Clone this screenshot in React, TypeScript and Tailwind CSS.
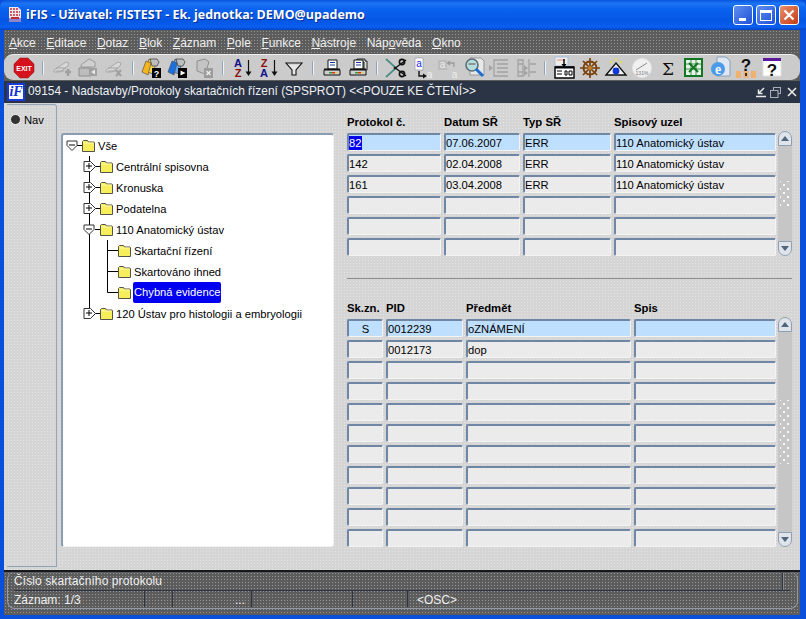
import type { ReactNode } from "react";

const font = "font-['Liberation_Sans',Arial,sans-serif]";
const dither =
  "bg-[radial-gradient(circle,rgba(255,255,255,0.35)_0.5px,transparent_0.7px)] bg-[length:3px_3px]";

const menus: [string, string, string][] = [
  ["", "A", "kce"],
  ["", "E", "ditace"],
  ["", "D", "otaz"],
  ["", "B", "lok"],
  ["", "Z", "áznam"],
  ["", "P", "ole"],
  ["", "F", "unkce"],
  ["", "N", "ástroje"],
  ["Náp", "o", "věda"],
  ["", "O", "kno"],
];

const Ico = ({ children }: { children: ReactNode }) => (
  <div className="flex h-[26px] w-[26px] shrink-0 items-center justify-center">
    <svg width="24" height="24" viewBox="0 0 24 24" className="block">
      {children}
    </svg>
  </div>
);

const Sep = () => (
  <div className="flex h-[26px] w-[12px] shrink-0 items-center justify-center">
    <div className="h-[14px] w-[2px] bg-[#eef2f6] border-l border-[#8fa3bd]" />
  </div>
);

const Exit = () => (
  <Ico>
    <path d="M8 2h8l6 6v8l-6 6H8l-6-6V8z" fill="#d4111c" stroke="#8f2a2f" strokeWidth="0.6" />
    <text x="12" y="14.5" textAnchor="middle" fontSize="7" fontWeight="700" fill="#fff" fontFamily="Liberation Sans">
      EXIT
    </text>
  </Ico>
);

const Ghost = ({ mark }: { mark: string }) => (
  <Ico>
    <path d="M4 14 16 6l3 1-1 3-8 6H4z" fill="#d8d8d8" stroke="#a9a9a9" />
    <path d="M6 12h10M6 15h8" stroke="#a2a2a2" />
    {mark === "plus" && <path d="M15 16h6M18 13v7" stroke="#a0a0a0" strokeWidth="2.4" />}
    {mark === "x" && <path d="m14 14 5 6M19 14l-5 6" stroke="#a0a0a0" strokeWidth="2" />}
  </Ico>
);

const Docs = ({ c1, c2, mark }: { c1: string; c2: string; mark: ReactNode }) => (
  <Ico>
    <path d="M9 3 16 6l-3 12-8-3z" fill={c2} stroke="#555" strokeWidth="0.7" />
    <path d="M6 5 11 7 8 19l-6-3z" fill={c1} stroke="#555" strokeWidth="0.7" />
    <path d="M10 3h7l2 3-2 4h-5z" fill="#bdbdbd" stroke="#333" strokeWidth="0.7" />
    {mark}
  </Ico>
);

const SortIcon = ({ top, bottom, c1, c2 }: { top: string; bottom: string; c1: string; c2: string }) => (
  <Ico>
    <text x="8" y="10.5" textAnchor="middle" fontSize="11" fontWeight="700" fill={c1} fontFamily="Liberation Sans">
      {top}
    </text>
    <text x="8" y="21" textAnchor="middle" fontSize="11" fontWeight="700" fill={c2} fontFamily="Liberation Sans">
      {bottom}
    </text>
    <path d="M18.5 4v13" stroke="#111" strokeWidth="1.2" />
    <path d="m15.5 15.5 3 4.5 3-4.5z" fill="#111" />
  </Ico>
);

const Printer = ({ stacked }: { stacked?: boolean }) => (
  <Ico>
    {stacked && <path d="M11 3h8v2h2v9h-3V6h-7z" fill="#ddd" stroke="#111" strokeWidth="0.9" />}
    <path d="M8 4h9v9H8z" fill="#fff" stroke="#111" />
    <path d="M10 6h5v1h-5zM10 8.5h5v1h-5z" fill="#1638a8" />
    <path d="M4 14h16v5H4z" fill="#cfcfcf" stroke="#111" />
    <path d="M4 12.5h16v1.5H4z" fill="#111" />
    <path d="M9 16h3v1.5H9z" fill="#2ea43a" />
    <path d="M12 16h3v1.5h-3z" fill="#d9322a" />
    <path d="M15 16h2v1.5h-2z" fill="#e7d020" />
  </Ico>
);

const App = () => {
  const rows1 = [
    ["82", "07.06.2007", "ERR", "110 Anatomický ústav"],
    ["142", "02.04.2008", "ERR", "110 Anatomický ústav"],
    ["161", "03.04.2008", "ERR", "110 Anatomický ústav"],
    ["", "", "", ""],
    ["", "", "", ""],
    ["", "", "", ""],
  ];
  const rows2 = [
    ["S", "0012239", "oZNÁMENÍ", ""],
    ["", "0012173", "dop", ""],
    ...Array.from({ length: 9 }, () => ["", "", "", ""]),
  ];

  return (
    <div className={`${font} flex h-[619px] w-[806px] flex-col overflow-hidden bg-[#0a4fdc] text-[12px] text-black`}>
      {/* xp title bar */}
      <div className="flex h-[30px] shrink-0 items-center rounded-t-[7px] bg-[linear-gradient(#0a55dc_0%,#1c74f4_12%,#0a62ee_30%,#0457e4_70%,#0a5ff0_90%,#0442c0_100%)] pl-[7px] pr-[7px]">
        <svg width="16" height="18" viewBox="0 0 16 18" className="mr-[3px] shrink-0">
          <path d="M2 1h9l3 3v12H2z" fill="#f4ecec" />
          <path d="M3 3h8M3 6h10M3 9h10" stroke="#c22a3a" strokeWidth="1.6" strokeDasharray="2 1" />
          <path d="M2 12h12v4H2z" fill="#8e86c8" />
          <path d="M4 11h8v2H4z" fill="#c22a3a" />
        </svg>
        <span className="font-['Open_Sans',sans-serif] text-[12.5px] leading-none font-bold whitespace-nowrap text-white [text-shadow:1px_1px_0_#0a2f90]">
          iFIS - Uživatel: FISTEST - Ek. jednotka: DEMO@upademo
        </span>
        <div className="ml-auto flex items-center gap-[3px]">
          <div className="flex h-[20px] w-[20px] items-end justify-start rounded-[3px] border border-white bg-[linear-gradient(135deg,#5f8ff0,#2050d8)] pb-[3px] pl-[5px]">
            <div className="h-[3px] w-[7px] bg-white" />
          </div>
          <div className="flex h-[20px] w-[20px] items-center justify-center rounded-[3px] border border-white bg-[linear-gradient(135deg,#5f8ff0,#2050d8)]">
            <div className="h-[11px] w-[12px] border border-t-[3px] border-white" />
          </div>
          <div className="flex h-[20px] w-[20px] items-center justify-center rounded-[3px] border border-white bg-[linear-gradient(135deg,#e8906c,#c63a14)]">
            <svg width="12" height="12" viewBox="0 0 12 12">
              <path d="m1.5 1.5 9 9M10.5 1.5l-9 9" stroke="#fff" strokeWidth="2.2" />
            </svg>
          </div>
        </div>
      </div>

      <div className="mb-[4px] ml-[4px] mr-[6px] flex min-h-0 flex-1 flex-col bg-[#5c5c5c]">
        {/* menu */}
        <div className={`flex h-[24px] shrink-0 items-center gap-[10.6px] pl-[5px] pt-[2px] text-[#f0f0f0] ${dither}`}>
          {menus.map(([pre, key, rest], i) => (
            <span key={i} className="whitespace-nowrap">
              {pre}
              <u>{key}</u>
              {rest}
            </span>
          ))}
        </div>

        {/* toolbar */}
        <div className="flex h-[26px] shrink-0 items-center rounded-[9px] border-t border-[#eeeeee] bg-[#cbcbcb] pl-[7px]">
          <Exit />
          <Sep />
          <Ghost mark="plus" />
          <Ico>
            <path d="M5 9 13 3l6 3v5H5z" fill="#d0d0d0" stroke="#9a9a9a" />
            <path d="M3 12h12v8H3z" fill="#bdbdbd" stroke="#8d8d8d" />
            <path d="M13 12h8v8h-8z" fill="#a0a0a0" />
            <path d="m19 13.5-4 2.5 4 2.5z" fill="#e8e8e8" />
          </Ico>
          <Ghost mark="x" />
          <Sep />
          <Docs
            c1="#f7b51d"
            c2="#f5d649"
            mark={
              <>
                <path d="M12 12h9v10h-9z" fill="#000" />
                <text x="16.5" y="20.5" textAnchor="middle" fontSize="9" fontWeight="700" fill="#fff" fontFamily="Liberation Sans">
                  ?
                </text>
              </>
            }
          />
          <Docs
            c1="#1a70e0"
            c2="#62a8ee"
            mark={
              <>
                <path d="M12 12h9v10h-9z" fill="#000" />
                <path d="m14.5 14.5 5 2.5-5 2.5z" fill="#fff" />
              </>
            }
          />
          <Ico>
            <path d="M5 5 13 3l4 3-4 12-8-3z" fill="#c4c4c4" stroke="#8e8e8e" />
            <path d="M12 12h9v10h-9z" fill="#9c9c9c" />
            <path d="m14.5 15 4 4M18.5 15l-4 4" stroke="#eee" strokeWidth="1.4" />
          </Ico>
          <Sep />
          <SortIcon top="A" bottom="Z" c1="#10108a" c2="#8a1010" />
          <SortIcon top="Z" bottom="A" c1="#8a1010" c2="#10108a" />
          <Ico>
            <path d="M4 7h16l-6 7v5h-4v-5z" fill="#e6e6e6" stroke="#111" strokeWidth="1.1" />
            <path d="M6 7.5h12" stroke="#777" strokeWidth="1.3" />
          </Ico>
          <Sep />
          <Printer />
          <Printer stacked />
          <Sep />
          <Ico>
            <path d="M2 3 12 12 2 21" fill="none" stroke="#4d8f8a" strokeWidth="1.8" />
            <path d="m22 4-12 9" stroke="#111" strokeWidth="1.4" />
            <path d="m22 20-12-9" stroke="#111" strokeWidth="1.4" />
            <circle cx="18" cy="6" r="2.6" fill="none" stroke="#111" strokeWidth="1.6" />
            <circle cx="18" cy="18" r="2.6" fill="none" stroke="#111" strokeWidth="1.6" />
          </Ico>
          <Ico>
            <path d="M5 2h8v12H5z" fill="#fff" stroke="#8c8ca8" strokeWidth="0.6" />
            <text x="9" y="11" textAnchor="middle" fontSize="10" fill="#1c1ce0" fontFamily="Liberation Sans">
              a
            </text>
            <path d="M9 15v5h5" fill="none" stroke="#111" strokeWidth="1.4" />
            <path d="m13 17.5 4 2.5-4 2.5z" fill="#111" />
            <text x="19.5" y="22" textAnchor="middle" fontSize="10" fill="#f2f2f2" fontFamily="Liberation Sans">
              a
            </text>
          </Ico>
          <Ico>
            <path d="M2 4h9v10H2z" fill="#bcbcbc" />
            <text x="6.5" y="12" textAnchor="middle" fontSize="10" fill="#eee" fontFamily="Liberation Sans">
              a
            </text>
            <path d="M12 7h6v4M14 5 11.5 7 14 9" fill="none" stroke="#9a9a9a" strokeWidth="1.3" />
            <text x="18.5" y="22" textAnchor="middle" fontSize="10" fill="#eee" fontFamily="Liberation Sans">
              a
            </text>
          </Ico>
          <Ico>
            <path d="M8 2h11l3 3v14H8z" fill="#e8e8e8" stroke="#9a9a9a" />
            <circle cx="10" cy="9" r="6" fill="#b7dede" stroke="#5e6e74" strokeWidth="1.6" />
            <path d="M6.5 8h7" stroke="#777" strokeWidth="1.4" />
            <path d="m14 13 7 7" stroke="#1c6cd0" strokeWidth="3" />
          </Ico>
          <Ico>
            <path d="M6 3v18M6 4h14M9 8h11M9 12h11M9 16h11M6 20h14" stroke="#a3a3a3" strokeWidth="1.3" fill="none" />
            <path d="m1 9 4 3-4 3z" fill="#a3a3a3" />
          </Ico>
          <Ico>
            <path d="M4 3v18M9 3v18M15 3v18M4 4h5M4 8h5M4 16h5M4 20h5M16 8h6M16 16h6" stroke="#a3a3a3" strokeWidth="1.3" fill="none" />
            <path d="m10 9 4 3-4 3zM10 14l4 3-4 3z" fill="#a3a3a3" />
          </Ico>
          <Sep />
          <Ico>
            <path d="M3 1h13v9H3z" fill="#f4ede6" stroke="#9bc0e8" />
            <path d="M5 4h8" stroke="#d88" />
            <path d="M3 11h19v11H3z" fill="#fff" stroke="#000" strokeWidth="1.4" />
            <path d="M3 10.5h19v2H3z" fill="#000" />
            <path d="M5 15h5M5 18h5M13 15h2v4h-2zM17 15h3v4h-3z" stroke="#000" fill="none" />
            <path d="M12 3v6" stroke="#000" strokeWidth="1.4" />
            <path d="m9.5 8 2.5 3.5L14.5 8z" fill="#000" />
          </Ico>
          <Ico>
            <circle cx="12" cy="12" r="6.5" fill="none" stroke="#7a4310" strokeWidth="2" />
            <path d="M12 2v20M2 12h20M5 5l14 14M19 5 5 19" stroke="#7a4310" strokeWidth="1.7" />
            <circle cx="12" cy="12" r="2" fill="#c9822a" />
          </Ico>
          <Ico>
            <path d="M2 19 12 7l10 12z" fill="#f2f2f2" stroke="#111" strokeWidth="1.4" />
            <circle cx="12" cy="15" r="3.4" fill="#1038d8" />
            <path d="M6 5l2 2M18 5l-2 2M12 2v3" stroke="#e8e030" strokeWidth="1.4" />
          </Ico>
          <Ico>
            <circle cx="12" cy="12" r="9.5" fill="#f0f0f0" stroke="#e4e4e4" />
            <path d="M6 14 17 7" stroke="#8a8a8a" />
            <text x="12" y="18.5" textAnchor="middle" fontSize="5" fill="#777" fontFamily="Liberation Sans">
              131%
            </text>
          </Ico>
          <Ico>
            <text x="12" y="18.5" textAnchor="middle" fontSize="17" fill="#111" fontFamily="DejaVu Serif">
              Σ
            </text>
          </Ico>
          <Ico>
            <path d="M3 3h17v17H3z" fill="#e8f3e8" stroke="#117722" strokeWidth="2" />
            <path d="M3 8h17M3 13h17M9 3v17M14 3v17" stroke="#117722" strokeWidth="0.8" />
            <path d="m7 7 9 9M16 7l-9 9" stroke="#117722" strokeWidth="2" />
          </Ico>
          <Ico>
            <path d="M9 1h9l4 4v15H9z" fill="#dfe8f2" stroke="#8aa0bc" />
            <circle cx="10" cy="13" r="7" fill="#4c9be8" />
            <text x="10" y="18" textAnchor="middle" fontSize="14" fontWeight="700" fill="#f2f8ff" fontFamily="Liberation Serif">
              e
            </text>
          </Ico>
          <Ico>
            <text x="12" y="15" textAnchor="middle" fontSize="17" fontWeight="700" fill="#111" fontFamily="Liberation Sans">
              ?
            </text>
            <path d="M2 15h5v7H2zM9.5 15h5v7h-5zM17 15h5v7h-5z" fill="#f0b070" />
            <path d="M12 17v3" stroke="#111" strokeWidth="1.6" />
          </Ico>
          <Ico>
            <path d="M3 3h18v17H3z" fill="#fff" stroke="#e0e0e0" />
            <path d="M3 2h18v3H3z" fill="#5a1a9a" />
            <text x="12" y="20" textAnchor="middle" fontSize="17" fontWeight="700" fill="#111" fontFamily="Liberation Sans">
              ?
            </text>
          </Ico>
        </div>

        {/* mdi window title */}
        <div className="mt-px flex h-[22px] shrink-0 items-center bg-[#2a3445] pl-[3px] pr-[3px] text-[#eef0f2]">
          <div className="mr-[3px] flex h-[18px] w-[18px] shrink-0 items-center justify-center border-2 border-[#1a3ad8] bg-white">
            <span className="font-['Liberation_Serif',serif] text-[14px] leading-none font-bold text-[#1030d0] italic">iF</span>
          </div>
          <span className="text-[11.9px] whitespace-nowrap">
            09154 - Nadstavby/Protokoly skartačních řízení (SPSPROT) &lt;&lt;POUZE KE ČTENÍ&gt;&gt;
          </span>
          <div className="ml-auto flex items-center gap-[3px]">
            <svg width="12" height="12" viewBox="0 0 12 12">
              <path d="M1 10.5h10M9 2 3.5 7.5M3.5 3.5v4h4" fill="none" stroke="#e8e8e8" strokeWidth="1.5" />
            </svg>
            <svg width="11" height="11" viewBox="0 0 11 11">
              <path d="M3.5 3V.5h7v6H8M.5 3.5h7.5v7H.5z" fill="none" stroke="#a8aeb6" strokeWidth="1.1" />
            </svg>
            <svg width="10" height="10" viewBox="0 0 10 10" className="ml-[3px]">
              <path d="m1 1 8 8M9 1 1 9" stroke="#e8e8e8" strokeWidth="1.6" />
            </svg>
          </div>
        </div>

        {/* form canvas */}
        <div className={`flex min-h-0 flex-1 bg-[#d5d5d5] pl-[3px] pt-px ${dither}`}>
          <div className="mb-[3px] flex w-[50px] shrink-0 items-start gap-[3px] rounded-tr-[3px] border-r border-b border-t border-[#95a5b8] pl-[3px] pt-[8px]">
            <span className="mt-[1px] flex h-[11px] w-[11px] items-center justify-center rounded-full border border-[#f4f4f4] bg-[#333]" />
            <span className="text-[11.2px] leading-[14px]">Nav</span>
          </div>

          <TreePanel />

          <div className="ml-[13px] flex w-[445px] shrink-0 flex-col">
            <Grid
              heads={["Protokol č.", "Datum SŘ", "Typ SŘ", "Spisový uzel"]}
              widths={["w-[94px]", "w-[76px]", "w-[88px]", "w-[162px]"]}
              rows={rows1}
              headerClass="h-[29px]"
              selectText
              gripClass="h-[26px]"
            />
            <div className="mt-[22px] h-px shrink-0 border-t border-[#8d8d8d] border-b-white" />
            <Grid
              heads={["Sk.zn.", "PID", "Předmět", "Spis"]}
              widths={["w-[36px]", "w-[77px]", "w-[165px]", "w-[142px]"]}
              rows={rows2}
              headerClass="h-[40px]"
              centerFirst
              gripClass="h-[64px]"
            />
          </div>
        </div>

        {/* status */}
        <div className={`h-[45px] shrink-0 border-t-2 border-[#15181d] pl-[3px] pr-[2px] ${dither}`}>
          <div className="flex h-[37px] flex-col rounded-[8px] border border-t-0 border-[#909cab] pl-[6px] pr-[7px] text-[#f0f0f0]">
            <div className="flex h-[19px] shrink-0 items-center border-b border-[#2a3445]">
              <span className="tracking-[0.1px]">Číslo skartačního protokolu</span>
              <div className="ml-auto h-[17px] w-[2px] border-l border-[#2a3445] bg-[#8a8a8a]" />
              <div className="w-[6px]" />
            </div>
            <div className="flex h-[16px] items-stretch">
              <div className="w-[131px] border-r border-[#2a3445]">Záznam: 1/3</div>
              <div className="w-[28px] border-r border-[#2a3445]" />
              <div className="w-[79px] border-r border-[#2a3445] pl-[62px]">...</div>
              <div className="w-[101px] border-r border-[#2a3445]" />
              <div className="w-[55px] border-r border-[#2a3445]" />
              <div className="pl-[9px]">&lt;OSC&gt;</div>
            </div>
          </div>
        </div>
      </div>
    </div>
  );
};

const Folder = () => (
  <svg width="13" height="12" viewBox="0 0 13 12" className="block shrink-0">
    <path d="M.5 3V1.5L1.5.5h4l1 1.5h5.5l.5.5v9H.5z" fill="#f6ee5a" stroke="#55524a" />
    <path d="M1.5 3h10" stroke="#fffbb0" />
  </svg>
);

const Expander = ({ open, x, y }: { open: boolean; x: number; y: number }) => (
  <g transform={`translate(${x} ${y})`}>
    {open ? (
      <path d="M-5-4.5H5V0L0 5-5 0z" fill="#fff" stroke="#333" />
    ) : (
      <path d="M-5-5H1.5L6.5 0 1.5 5H-5z" fill="#fff" stroke="#333" />
    )}
    <path d="M-3-.5H3" stroke="#000" />
    {!open && <path d="M0-3.5v6" stroke="#000" />}
  </g>
);

const TreeRow = ({
  label,
  level,
  open,
  trunk,
  child,
  selected,
}: {
  label: string;
  level: number;
  open?: boolean;
  trunk?: "full" | "half";
  child?: "full" | "half";
  selected?: boolean;
}) => (
  <div className="flex h-[21px] items-center">
    <svg width={19 + level * 18} height="21" viewBox={`0 0 ${19 + level * 18} 21`} className="block shrink-0">
      {trunk && <path d={`M26.5 0v${trunk === "full" ? 21 : 10}`} stroke="#000" fill="none" />}
      {child && <path d={child === "full" ? "M44.5 0v21M44.5 10.5H55" : "M44.5 0v10.5H55"} stroke="#000" fill="none" />}
      {level === 0 && (
        <>
          <path d="M14 10.5h5" stroke="#000" />
          <Expander open x={9} y={10.5} />
        </>
      )}
      {level === 1 && (
        <>
          <path d="M32 10.5h5" stroke="#000" />
          <Expander open={!!open} x={26} y={10.5} />
        </>
      )}
    </svg>
    <Folder />
    <span
      className={`ml-[2px] px-px whitespace-nowrap ${selected ? "h-[21px] rounded-[2px] bg-[#0000f0] leading-[21px] text-white" : "leading-[20px]"}`}
    >
      {label}
    </span>
  </div>
);

const TreePanel = () => (
  <div className="mb-[23px] ml-[4px] mt-[29px] w-[273px] shrink-0 rounded-[3px] border-t-2 border-l-2 border-r border-b border-t-[#8a9db5] border-l-[#8a9db5] border-r-[#f2f2f2] border-b-[#f2f2f2] bg-white text-[11.2px]">
    <TreeRow label="Vše" level={0} />
    <TreeRow label="Centrální spisovna" level={1} trunk="full" />
    <TreeRow label="Kronuska" level={1} trunk="full" />
    <TreeRow label="Podatelna" level={1} trunk="full" />
    <TreeRow label="110 Anatomický ústav" level={1} open trunk="full" />
    <TreeRow label="Skartační řízení" level={2} trunk="full" child="full" />
    <TreeRow label="Skartováno ihned" level={2} trunk="full" child="full" />
    <TreeRow label="Chybná evidence" level={2} trunk="full" child="half" selected />
    <TreeRow label="120 Ústav pro histologii a embryologii" level={1} trunk="half" />
  </div>
);

const Grid = ({
  heads,
  widths,
  rows,
  headerClass,
  selectText,
  centerFirst,
  gripClass,
}: {
  heads: string[];
  widths: string[];
  rows: string[][];
  headerClass: string;
  selectText?: boolean;
  centerFirst?: boolean;
  gripClass: string;
}) => (
  <div className="flex shrink-0 flex-col">
    <div className={`flex shrink-0 items-end gap-[3px] pb-[4px] text-[11.3px] font-bold ${headerClass}`}>
      {heads.map((h, i) => (
        <span key={h} className={`${widths[i]} shrink-0 leading-[14px] whitespace-nowrap`}>
          {h}
        </span>
      ))}
    </div>
    <div className="flex gap-[2px]">
      <div className="flex flex-col gap-[3px]">
        {rows.map((row, r) => (
          <div key={r} className="flex gap-[3px]">
            {row.map((cell, c) => (
              <div
                key={c}
                className={`${widths[c]} flex h-[18px] shrink-0 items-center overflow-hidden rounded-[2px] border-t-2 border-l-2 border-r border-b border-t-[#6f86a5] border-l-[#6f86a5] border-r-[#f4f4f4] border-b-[#f4f4f4] pt-px text-[11.2px] leading-[14px] whitespace-nowrap ${
                  r === 0 ? "bg-[#bfdfff]" : "bg-[#ebebeb]"
                } ${centerFirst && c === 0 ? "justify-center" : ""}`}
              >
                {selectText && r === 0 && c === 0 ? (
                  <span className="bg-[#0000f0] pr-px text-white">{cell}</span>
                ) : (
                  <span>{cell}</span>
                )}
              </div>
            ))}
          </div>
        ))}
      </div>
      <div className="-mt-[2px] flex w-[14px] shrink-0 flex-col">
        <div className="flex h-[15px] shrink-0 items-center justify-center rounded-t-[7px] border border-[#8fa0b5] bg-[#dfe4ea]">
          <svg width="8" height="5" viewBox="0 0 8 5">
            <path d="M0 5 4 0l4 5z" fill="#52657d" />
          </svg>
        </div>
        <div className="flex flex-1 items-center justify-center bg-[#c6c6c6]">
          <div
            className={`${gripClass} w-[10px] bg-[radial-gradient(circle,#f8f8f8_1px,transparent_1.3px),radial-gradient(circle,#f8f8f8_1px,transparent_1.3px)] bg-[length:8px_8px] bg-[position:0_0,4px_4px]`}
          />
        </div>
        <div className="flex h-[15px] shrink-0 items-center justify-center rounded-b-[7px] border border-[#8fa0b5] bg-[#dfe4ea]">
          <svg width="8" height="5" viewBox="0 0 8 5">
            <path d="M0 0h8L4 5z" fill="#52657d" />
          </svg>
        </div>
      </div>
    </div>
  </div>
);

export default App;
